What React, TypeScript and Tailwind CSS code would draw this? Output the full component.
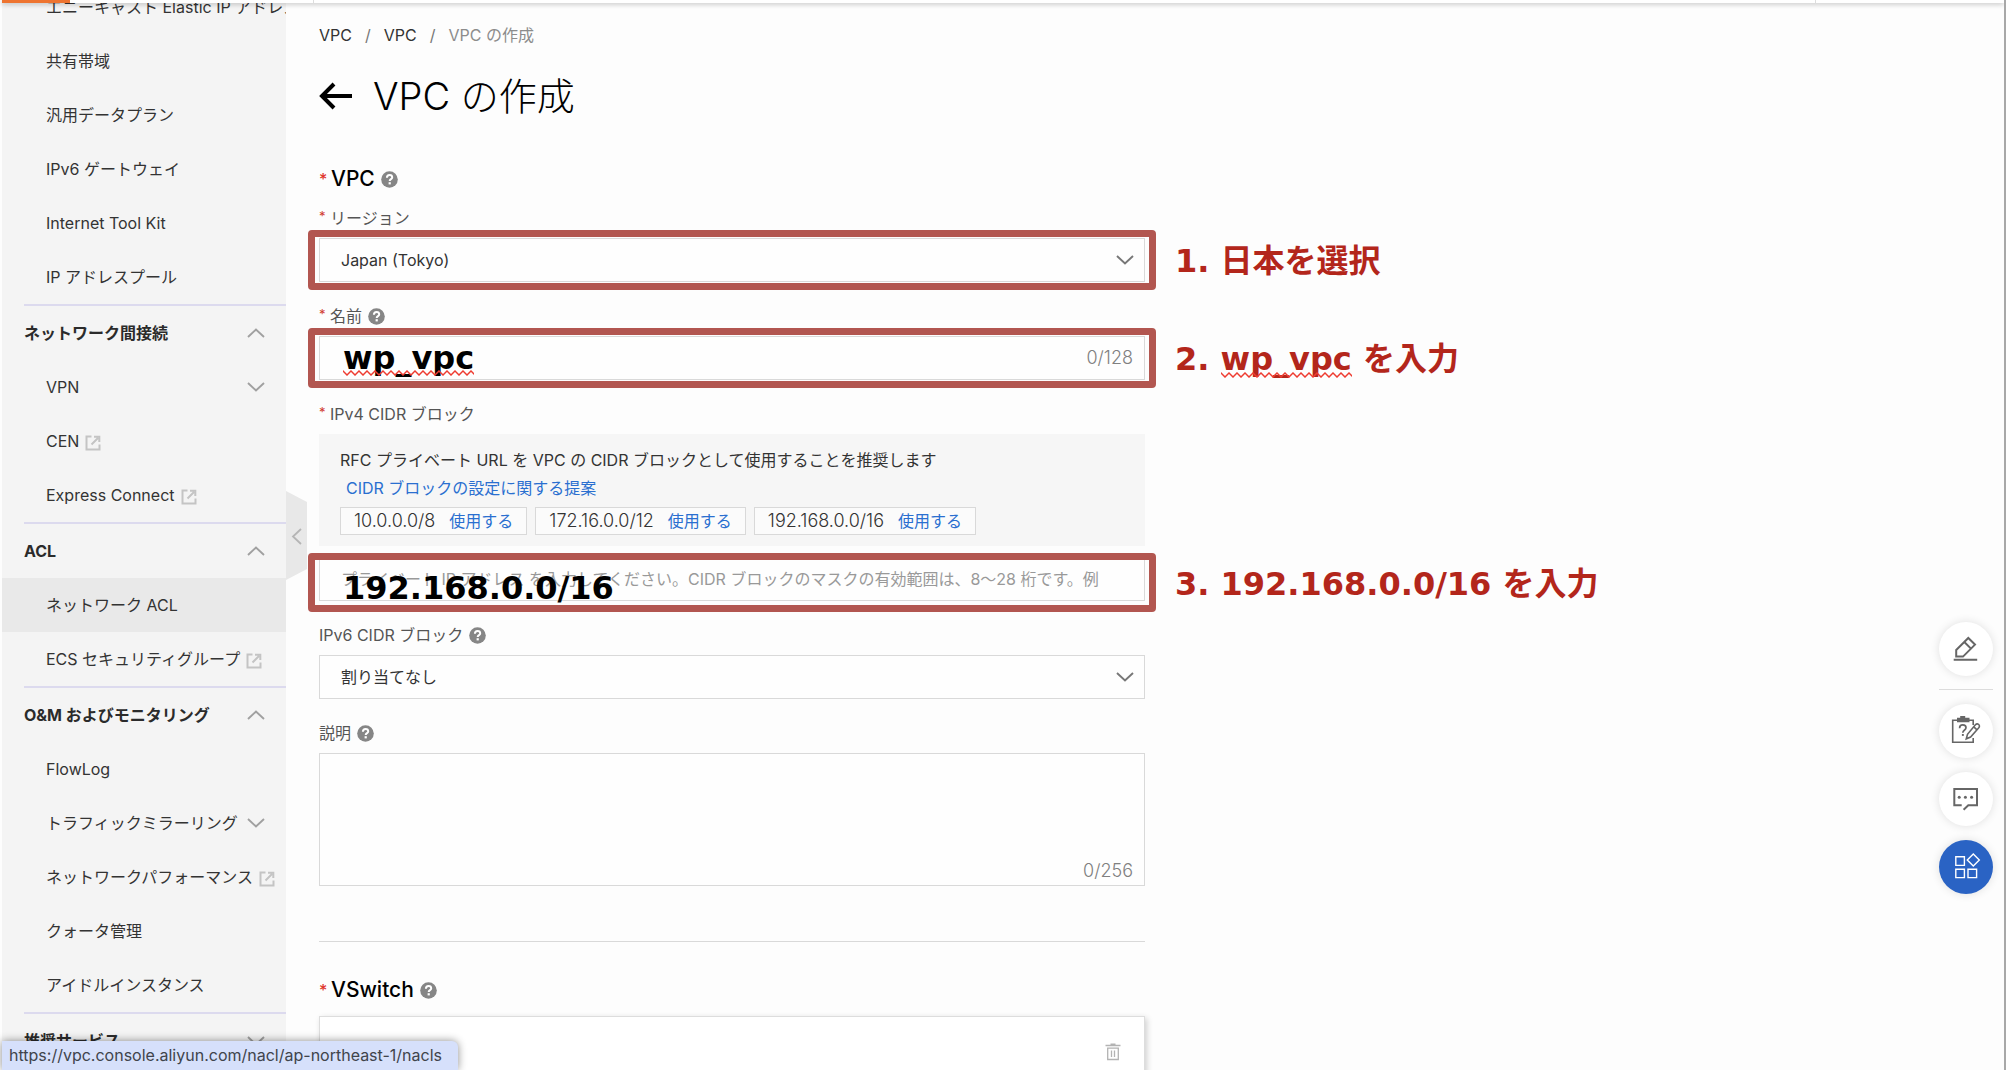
import { useState, type ReactNode } from "react";
import { clsx } from "clsx";

type NavItem = {
  label: string;
  external?: boolean;
  expandable?: boolean;
  active?: boolean;
};

type NavGroup = {
  title?: string;
  open?: boolean;
  items: NavItem[];
};

const groups: NavGroup[] = [
  {
    items: [
      { label: "エニーキャスト Elastic IP アドレス" },
      { label: "共有帯域" },
      { label: "汎用データプラン" },
      { label: "IPv6 ゲートウェイ" },
      { label: "Internet Tool Kit" },
      { label: "IP アドレスプール" },
    ],
  },
  {
    title: "ネットワーク間接続",
    open: true,
    items: [
      { label: "VPN", expandable: true },
      { label: "CEN", external: true },
      { label: "Express Connect", external: true },
    ],
  },
  {
    title: "ACL",
    open: true,
    items: [
      { label: "ネットワーク ACL", active: true },
      { label: "ECS セキュリティグループ", external: true },
    ],
  },
  {
    title: "O&M およびモニタリング",
    open: true,
    items: [
      { label: "FlowLog" },
      { label: "トラフィックミラーリング", expandable: true },
      { label: "ネットワークパフォーマンス", external: true },
      { label: "クォータ管理" },
      { label: "アイドルインスタンス" },
    ],
  },
  { title: "推奨サービス", open: false, items: [] },
];

const cidrPresets = ["10.0.0.0/8", "172.16.0.0/12", "192.168.0.0/16"];

function Chevron({ up, className }: { up?: boolean; className?: string }) {
  return (
    <svg
      viewBox="0 0 18 10"
      className={clsx("h-[10px] w-[18px] shrink-0", className)}
      fill="none"
      stroke="currentColor"
      strokeWidth="1.9"
    >
      <path d={up ? "M1 9 9 1.5 17 9" : "M1 1 9 8.5 17 1"} />
    </svg>
  );
}

function ExternalIcon() {
  return (
    <svg
      viewBox="0 0 16 16"
      className="mt-1 h-4 w-4 shrink-0 text-[#c4c4c4]"
      fill="none"
      stroke="currentColor"
      strokeWidth="2"
    >
      <path d="M6.5 1.5H1.5V14.5H14.5V9.5" />
      <path d="M6.5 9.5 13 3M9 1.8H14.3V7" />
    </svg>
  );
}

function HelpIcon() {
  return (
    <svg viewBox="0 0 17 17" className="h-[17px] w-[17px] shrink-0">
      <circle cx="8.5" cy="8.5" r="8.3" fill="#868686" />
      <path
        d="M5.9 6.8C5.9 5 7 4 8.6 4s2.6 1 2.6 2.4c0 1.7-2.5 1.8-2.5 3.6"
        fill="none"
        stroke="#fff"
        strokeWidth="2"
      />
      <rect x="7.6" y="11.2" width="2.2" height="2.2" fill="#fff" />
    </svg>
  );
}

function Sidebar() {
  return (
    <aside className="w-[284px] shrink-0 overflow-hidden bg-[#f4f4f4]">
      {/* scrolled part-way down */}
      <nav className="-mt-[23px]">
        {groups.map((g, i) => (
          <div key={i}>
            {g.title && (
              <button className="ml-[22px] flex h-14 w-[262px] items-center justify-between border-t-2 border-[#dcdaee] pr-[21px] text-left font-bold text-[#2b2b2b]">
                {g.title}
                <Chevron up={g.open} className="text-[#a0a0a0]" />
              </button>
            )}
            {g.items.map((item) => (
              <a
                key={item.label}
                href="#"
                className={clsx(
                  "flex h-[54px] items-center gap-1.5 pl-11 whitespace-nowrap text-[#333]",
                  item.active && "bg-[#e9e9e9]",
                  item.expandable && "justify-between pr-[21px]"
                )}
              >
                {item.label}
                {item.external && <ExternalIcon />}
                {item.expandable && <Chevron className="text-[#a0a0a0]" />}
              </a>
            ))}
          </div>
        ))}
      </nav>
    </aside>
  );
}

function Label({
  htmlFor,
  required,
  help,
  children,
}: {
  htmlFor: string;
  required?: boolean;
  help?: boolean;
  children: ReactNode;
}) {
  return (
    <div className="mb-2 flex h-6 items-center gap-1.5 text-[#555]">
      <label htmlFor={htmlFor} className="flex leading-6">
        {required && <span className="w-[11px] text-[13px] leading-5 text-[#d03a2f]">*</span>}
        {children}
      </label>
      {help && <HelpIcon />}
    </div>
  );
}

function SectionTitle({ children }: { children: ReactNode }) {
  return (
    <h2 className="flex h-7 items-center text-[21px] font-medium text-black">
      <span className="w-3 text-base leading-5 text-[#e0352b]">*</span>
      <span className="mr-1.5">{children}</span>
      <HelpIcon />
    </h2>
  );
}

// Red frame around a field with the step written to its right
function Callout({ low, children }: { low?: boolean; children: ReactNode }) {
  return (
    <>
      <div
        className={clsx(
          "pointer-events-none absolute -inset-x-[11px] rounded-sm border-[7px] border-[#b25650]",
          low ? "-top-1 -bottom-[11px]" : "-inset-y-2"
        )}
      />
      <p
        className={clsx(
          "absolute left-full ml-[30px] text-[32px] leading-[46px] font-bold whitespace-nowrap text-[#b3261b] font-['DejaVu_Sans','Noto_Sans_CJK_JP',sans-serif]",
          low ? "top-1" : "top-0"
        )}
      >
        {children}
      </p>
    </>
  );
}

// Spell-checker underline
function Typo({ children }: { children: ReactNode }) {
  return (
    <span className="relative inline-block">
      {children}
      <svg className="absolute bottom-1 left-0 h-[6px] w-full" fill="none">
        <defs>
          <pattern id="squiggle" width="8" height="6" patternUnits="userSpaceOnUse">
            <path d="M-1 0 0 1 4 5 8 1 9 0" stroke="#ee3b30" strokeWidth="1.5" />
          </pattern>
        </defs>
        <rect width="100%" height="6" fill="url(#squiggle)" />
      </svg>
    </span>
  );
}

function FloatingButton({
  label,
  primary,
  children,
}: {
  label: string;
  primary?: boolean;
  children: ReactNode;
}) {
  return (
    <button
      aria-label={label}
      className={clsx(
        "h-[54px] w-[54px] rounded-full shadow-[0_0_10px_rgba(0,0,0,0.12)]",
        primary ? "bg-[#2a63c4] text-white" : "bg-white text-[#666]"
      )}
    >
      <svg viewBox="0 0 54 54" className="h-full w-full" fill="none" stroke="currentColor">
        {children}
      </svg>
    </button>
  );
}

export default function App() {
  const [region, setRegion] = useState("tokyo");
  const [ipv6, setIpv6] = useState("none");
  const [cidr, setCidr] = useState("");

  const field = "block h-11 w-full appearance-none border border-[#d9d9d9] bg-[#fefefe] px-[21px] text-[#333] outline-none";
  const typed =
    "pointer-events-none absolute left-6 text-[32px] font-bold text-black font-['DejaVu_Sans',sans-serif]";

  return (
    <div className="flex h-screen flex-col overflow-hidden border-r-2 border-[#a8a8a8] bg-[#fdfdfd] pl-[2px] text-base font-['Inter','Noto_Sans_CJK_JP',sans-serif]">
      {/* bottom edge of the console's top bar */}
      <header className="relative z-10 flex h-[3px] shrink-0 bg-white shadow-[0_1px_5px_rgba(0,0,0,0.3)]">
        <div className="w-[68px] bg-[#ee7430]" />
        <div className="ml-[243px] flex-1 border-l border-[#ddd]" />
        <div className="w-[189px] border-l border-[#ddd]" />
      </header>

      <div className="flex min-h-0 flex-1">
        <Sidebar />

        <div className="flex w-[33px] shrink-0 pt-[488px]">
          <button aria-label="メニューを閉じる" className="h-[89px] w-[21px]">
            <svg viewBox="0 0 21 89" className="h-full w-full" fill="none">
              <path d="M0 0 21 11V78L0 89Z" fill="#e8e8e8" />
              <path d="M15 38 7 45.5 15 53" stroke="#b5b5b5" strokeWidth="1.8" />
            </svg>
          </button>
        </div>

        <main className="w-[826px] shrink-0 pt-5">
          <nav className="flex h-6 items-center gap-[13px] text-[#333]">
            <a href="#">VPC</a>
            <span className="text-[#777]">/</span>
            <a href="#">VPC</a>
            <span className="text-[#777]">/</span>
            <span className="text-[#8c8c8c]">VPC の作成</span>
          </nav>

          <div className="mt-[22px] flex h-[54px] items-center gap-[21px]">
            <a href="#" aria-label="戻る">
              <svg viewBox="0 0 33 28" className="h-7 w-[33px]" fill="none" stroke="#000" strokeWidth="4">
                <path d="M2.5 14H33M15 2 3 14 15 26" />
              </svg>
            </a>
            <h1 className="text-[38px] font-light text-black">VPC の作成</h1>
          </div>

          <div className="mt-[42px]">
            <SectionTitle>VPC</SectionTitle>
          </div>

          <form className="mt-[13px] flex flex-col gap-[22px]">
            <div>
              <Label htmlFor="region" required>
                リージョン
              </Label>
              <div className="relative">
                <select id="region" value={region} onChange={(e) => setRegion(e.target.value)} className={field}>
                  <option value="tokyo">Japan (Tokyo)</option>
                </select>
                <Chevron className="absolute top-[17px] right-[11px] text-[#777]" />
                <Callout>1. 日本を選択</Callout>
              </div>
            </div>

            <div>
              <Label htmlFor="name" required help>
                名前
              </Label>
              <div className="relative">
                <input id="name" className={field} />
                <span className="absolute top-[10px] right-3 text-lg leading-6 font-light text-[#808080]">0/128</span>
                <div className={clsx(typed, "top-0 leading-[44px]")}>
                  <Typo>wp_vpc</Typo>
                </div>
                <Callout>
                  2. <Typo>wp_vpc</Typo> を入力
                </Callout>
              </div>
            </div>

            <div>
              <Label htmlFor="cidr" required>
                IPv4 CIDR ブロック
              </Label>
              <div className="h-28 bg-[#f6f6f6] px-[21px] pt-3">
                <p className="leading-7 text-[#333]">
                  RFC プライベート URL を VPC の CIDR ブロックとして使用することを推奨します
                </p>
                <a href="#" className="ml-1.5 block leading-7 text-[#2a6fd0]">
                  CIDR ブロックの設定に関する提案
                </a>
                <div className="mt-[5px] flex gap-2">
                  {cidrPresets.map((c) => (
                    <div
                      key={c}
                      className="flex h-7 items-center gap-3.5 border border-[#d9d9d9] bg-[#fbfbfb] px-[13px] text-[#333]"
                    >
                      <span className="text-lg leading-6 font-light">{c}</span>
                      <button type="button" onClick={() => setCidr(c)} className="text-[#2a6fd0]">
                        使用する
                      </button>
                    </div>
                  ))}
                </div>
              </div>
              <div className="relative mt-[11px]">
                <input
                  id="cidr"
                  value={cidr}
                  onChange={(e) => setCidr(e.target.value)}
                  placeholder="プライベート IP アドレス を入力してください。CIDR ブロックのマスクの有効範囲は、8～28 桁です。例"
                  className={clsx(field, "placeholder:text-[#999]")}
                />
                <div className={clsx(typed, "top-[7px] leading-[48px]")}>192.168.0.0/16</div>
                <Callout low>3. 192.168.0.0/16 を入力</Callout>
              </div>
            </div>

            <div>
              <Label htmlFor="ipv6" help>
                IPv6 CIDR ブロック
              </Label>
              <div className="relative">
                <select id="ipv6" value={ipv6} onChange={(e) => setIpv6(e.target.value)} className={field}>
                  <option value="none">割り当てなし</option>
                </select>
                <Chevron className="absolute top-[17px] right-[11px] text-[#777]" />
              </div>
            </div>

            <div>
              <Label htmlFor="description" help>
                説明
              </Label>
              <div className="relative">
                <textarea
                  id="description"
                  className="block h-[133px] w-full resize-none border border-[#d9d9d9] bg-[#fefefe] p-3 outline-none"
                />
                <span className="absolute right-3 bottom-[3px] text-lg leading-6 font-light text-[#808080]">0/256</span>
              </div>
            </div>
          </form>

          <hr className="mt-[55px] border-[#d9d9d9]" />

          <div className="mt-[34px]">
            <SectionTitle>VSwitch</SectionTitle>
          </div>
          <div className="mt-3 flex h-40 items-start justify-end border border-[#ddd] bg-white pt-[26px] pr-[23px] shadow-[2px_2px_6px_rgba(0,0,0,0.18)]">
            <button type="button" aria-label="削除">
              <svg viewBox="0 0 16 18" className="h-[18px] w-4" fill="none" stroke="#b3b3b3" strokeWidth="1.3">
                <path d="M.5 2.5H15.5M5.5 1.2H10.5M2.7 5.2H13.3V16.5H2.7ZM6.5 7.5V14M9.5 7.5V14" />
              </svg>
            </button>
          </div>
        </main>

        {/* floating tools */}
        <div className="ml-auto flex flex-col items-center gap-[14px] pt-[619px] pr-[11px]">
          <FloatingButton label="編集">
            <path
              d="M17.2 28 29.3 16 36 22.6 24 34.6H17.2ZM25.3 20 32 26.6M14.7 37.7H38.2"
              strokeWidth="2"
            />
          </FloatingButton>
          <hr className="-mt-px w-full border-[#dcdcdc]" />
          <FloatingButton label="アンケート">
            <path d="M18 16.3H13.7V38.2H34.2V34M30 16.3H34.2V21" strokeWidth="1.6" />
            <path d="M18 13.8H21.2V12H26.2V13.8H30.5V18.2H18Z" fill="currentColor" stroke="none" />
            <path d="M20.6 24.2C20.6 21.9 22 20.9 23.8 20.9S27 22 27 23.8C27 26 23.8 26 23.8 28.8" strokeWidth="1.7" />
            <rect x="22.9" y="30" width="1.9" height="1.9" fill="currentColor" stroke="none" />
            <path
              d="M27.3 34.8 28.5 30.3 36.4 20.8C37.4 19.7 38.8 19.7 39.7 20.5S40.7 22.8 39.8 23.8L31.6 33ZM34.8 22.8 38 25.8"
              strokeWidth="1.6"
            />
          </FloatingButton>
          <FloatingButton label="チャット">
            <path d="M22.7 33.3H15.3V16.9H38V33.3H29.3L24.6 37.8" strokeWidth="2" />
            <g fill="currentColor" stroke="none">
              <circle cx="20.2" cy="25.3" r="1.5" />
              <circle cx="26.4" cy="25.3" r="1.5" />
              <circle cx="32.6" cy="25.3" r="1.5" />
            </g>
          </FloatingButton>
          <FloatingButton label="メニュー" primary>
            <path
              d="M16.8 16.8H25.4V25.4H16.8ZM16.8 29.2H25.4V37.6H16.8ZM29 29.2H37.6V37.6H29ZM34.3 14 40.3 20 34.3 26 28.3 20Z"
              strokeWidth="1.4"
            />
          </FloatingButton>
        </div>
      </div>

      {/* browser status bubble */}
      <div className="absolute bottom-0 left-[2px] h-[29px] rounded-tr-md bg-[#d6e0fb] pr-4 pl-[7px] leading-7 text-[#40444c] shadow-[0_0_8px_rgba(0,0,0,0.45)]">
        https://vpc.console.aliyun.com/nacl/ap-northeast-1/nacls
      </div>
    </div>
  );
}
